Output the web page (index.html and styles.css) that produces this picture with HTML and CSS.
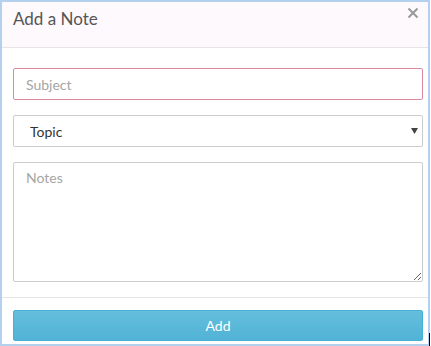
FILE: index.html
```html
<!DOCTYPE html>
<html lang="en">
<head>
  <meta charset="UTF-8" />
  <title>Add a Note</title>
  <link rel="stylesheet" href="styles.css">
</head>
<body>

  <div class="modal">
    <div class="modal-header">
      <h4>Add a Note</h4>
      <svg class="close" width="12" height="12" viewBox="0 0 12 12">
        <path d="M1.5 1.5 L10.5 10.5 M10.5 1.5 L1.5 10.5" stroke="#999" stroke-width="2" />
      </svg>
    </div>

    <form class="modal-body">
      <input type="text" class="field subject" placeholder="Subject" />
      <div class="select-wrap">
        <select class="field topic">
          <option>Topic</option>
        </select>
        <svg class="caret" width="7" height="6" viewBox="0 0 7 6">
          <path d="M0 0 H7 L3.5 6 Z" fill="#444" />
        </svg>
      </div>
      <textarea class="field notes" placeholder="Notes"></textarea>
    </form>

    <div class="modal-footer">
      <button type="button" class="add-btn">Add</button>
    </div>
  </div>
  <div class="cursor-mark"></div>

</body>
</html>
```

FILE: styles.css
```css
body {
  margin: 0;
  font-family: Lato, 'Liberation Sans', sans-serif;
  background: #fff;
  color: #333;
}
.modal {
  width: 426px;
  height: 342px;
  border: 2px solid #b3d1ec;
  display: flex;
  flex-direction: column;
}
.modal-header {
  height: 45px;
  background: #fdf9fd;
  border-bottom: 1px solid #e5e5e5;
  position: relative;
}
.modal-header h4 {
  margin: 0;
  padding: 4px 0 0 11px;
  font-size: 17px;
  font-weight: 400;
  line-height: 26px;
  color: #555;
}
.close {
  position: absolute;
  left: 405px;
  top: 5px;
}
.modal-body {
  padding: 20px 0 15px 11px;
  display: flex;
  flex-direction: column;
  gap: 15px;
  border-bottom: 1px solid #e5e5e5;
}
.field {
  width: 410px;
  box-sizing: border-box;
  border: 1px solid #ccc;
  border-radius: 2px;
  font-family: Lato, sans-serif;
  font-size: 14px;
  color: #333;
  background: #fff;
  margin: 0;
}
.field::placeholder {
  color: #a5a5a5;
}
.subject {
  height: 32px;
  padding: 0 12px;
  border-color: #d9899b;
}
.select-wrap {
  position: relative;
  width: 410px;
}
.topic {
  display: block;
  height: 32px;
  padding: 0 16px;
  appearance: none;
  -webkit-appearance: none;
}
.caret {
  position: absolute;
  left: 398px;
  top: 13px;
}
.notes {
  height: 120px;
  padding: 6px 12px;
  resize: vertical;
}
.modal-footer {
  padding: 12px 0 0 11px;
}
.add-btn {
  width: 410px;
  height: 31px;
  border: 1px solid #46b0d5;
  border-radius: 2px;
  background: linear-gradient(#64bedc, #51b3d6);
  color: #fff;
  font-family: Lato, sans-serif;
  font-size: 14px;
  padding: 0;
}
.cursor-mark {
  position: absolute;
  left: 429px;
  top: 333px;
  width: 1px;
  height: 13px;
  background: #000;
}
```
